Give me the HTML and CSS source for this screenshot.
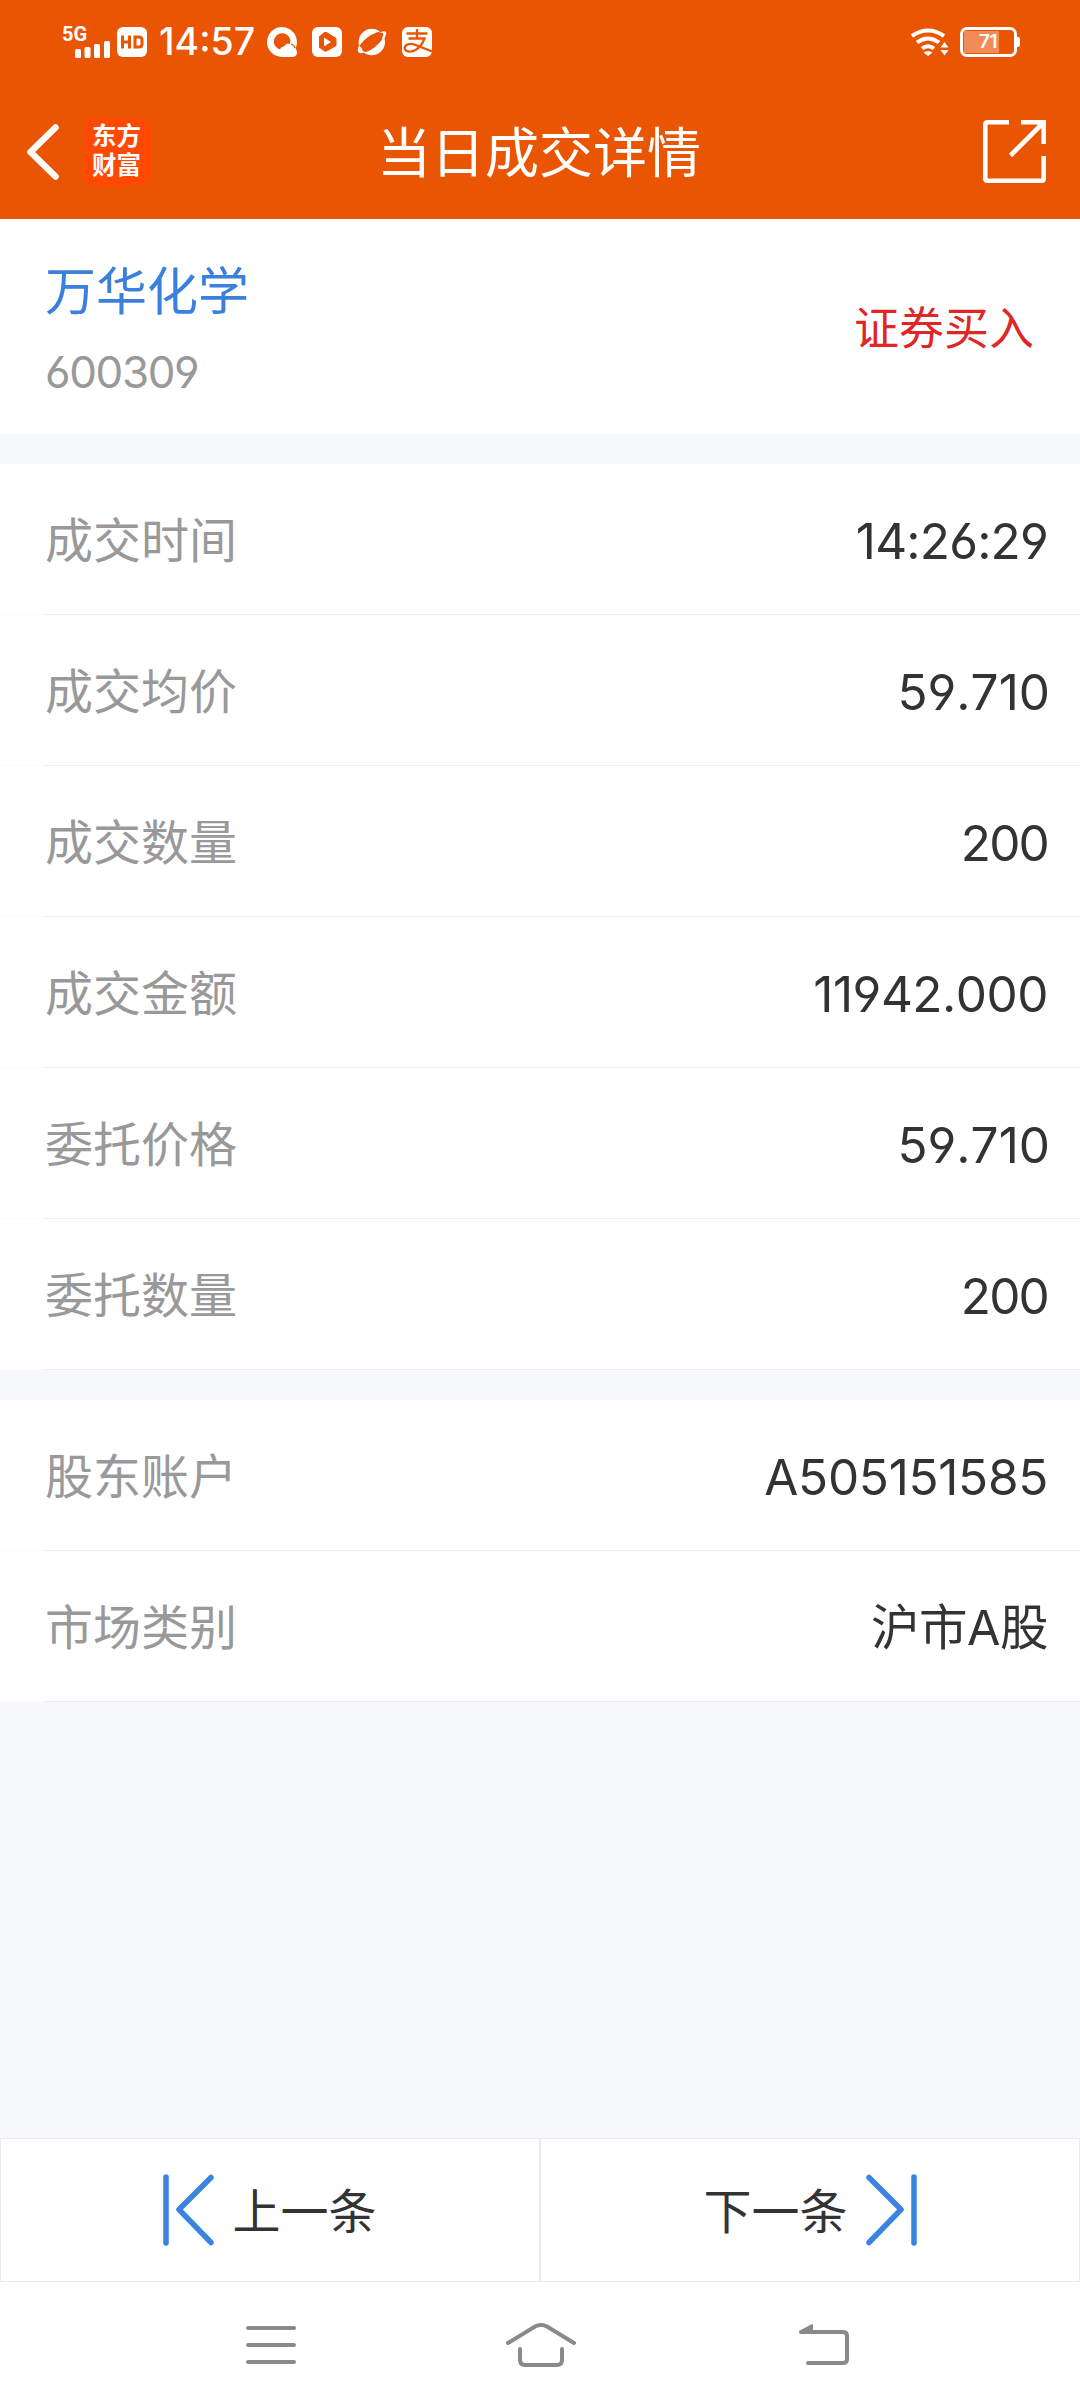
FILE: index.html
```html
<!DOCTYPE html>
<html lang="zh-CN">
<head>
<meta charset="utf-8">
<title>当日成交详情</title>
<link rel="stylesheet" href="styles.css">
</head>
<body>
<div class="screen">
  <header class="top">
    <div class="status">
      <div class="status-left">
        <div class="signal">
          <span class="net">5G</span>
          <svg class="bars" width="36" height="17" viewBox="0 0 36 17" fill="#fff"><rect x="0" y="8" width="6" height="9" rx="1.5"/><rect x="9.500" y="6" width="6" height="11" rx="1.500"/><rect x="19" y="3" width="6" height="14" rx="1.500"/><rect x="29" y="0" width="6" height="17" rx="1.500"/></svg>
        </div>
        <svg class="ic-hd" width="30" height="30" viewBox="0 0 30 30"><rect width="30" height="30" rx="6" fill="#fff"/><path d="M5.500 8.500v13M12.500 8.500v13M5.500 15h7M18 10v10h4q3 0 3-3v-4q0-3-3-3z" fill="none" stroke="#ea5504" stroke-width="3"/></svg>
        <span class="clock">14:57</span>
        <svg class="ic" width="30" height="30" viewBox="0 0 30 30"><path d="M15 0a15 15 0 0 1 13.500 21.500q1.500 1.500 1.500 4 0 4-4.500 4.500H15A15 15 0 0 1 15 0z" fill="#fff"/><path d="M13 22.500A8.300 8.300 0 1 1 23 17q-4-1.500-6 2.500-3 0-4 3z" fill="#ea5504"/><path d="M24 17q3.500 1 4 4" stroke="#ea5504" stroke-width="1.300" fill="none"/></svg>
        <svg class="ic" width="30" height="30" viewBox="0 0 30 30"><rect width="30" height="30" rx="6" fill="#fff"/><path d="M12.500 5h2l9 5.500q1 .7 1 2v5q0 1.300-1 2l-9 5h-2L7 20.500V9.500z" fill="#ea5504"/><path d="M12 10.500v9l7-4.500z" fill="#fff"/></svg>
        <svg class="ic" width="30" height="30" viewBox="0 0 30 30"><circle cx="14.800" cy="15" r="13.200" fill="#fff"/><path d="M2.500 19Q7 12 14 8 20 4.500 26 4 29 4 28 7.500 25 14 18 20 12 25 5 25.500 1.500 25 2.500 19z" fill="#ea5504"/><path d="M2 18.500Q-1 25.500 3.500 26.300 6 26.300 8 25.500L4.500 21zM22.500 5.500Q29.500 2.500 29.300 6.500 28.800 9.500 26 13.500L24.500 9z" fill="#fff"/><path d="M5 21.500Q5 16 13 10.500 21 5 26 6 27.500 9.500 20 16 12 23.500 6 24.500z" fill="#ea5504"/></svg>
        <svg class="ic" width="30" height="30" viewBox="0 0 30 30"><rect width="30" height="30" rx="6" fill="#fff"/><path d="M4.500 6.500h21M15 2v9.500M6.500 11.500H22.500Q19.500 19.500 13.500 23 8 26 4 23.500 1 20.500 4.500 18 9 15.500 15 18.500L30 24.500" fill="none" stroke="#ea5504" stroke-width="2.300"/></svg>
      </div>
      <div class="status-right">
        <svg width="40" height="28" viewBox="0 0 40 28"><g fill="none" stroke="#fff" stroke-width="4"><path d="M2 8Q18-3 34 8"/><path d="M7 14.500Q18 6.500 29 14.500"/><path d="M12 20.500Q18 16 24 20.500"/></g><path d="M13.500 24.500Q18 21.500 22.500 24.500L18 28zM34.500 14l4 5.500h-8zM34.500 27.500l4-5.500h-8z" fill="#fff"/></svg>
        <div class="battery"><span class="charge"></span><span class="percent">71</span></div>
        <span class="battery-tip"></span>
      </div>
    </div>
    <div class="titlebar">
      <div class="title-left">
        <svg width="34" height="56" viewBox="0 0 34 56"><path d="M29.500 3.500L4.500 28l25 24.500" fill="none" stroke="#fff" stroke-width="6.500" stroke-linecap="round" stroke-linejoin="round"/></svg>
        <div class="logo">东方<br>财富</div>
      </div>
      <h1 class="title">当日成交详情</h1>
      <svg class="share" width="64" height="63" viewBox="0 0 64 63"><path d="M26 2.300H4.500Q2.300 2.300 2.300 4.500V58.500Q2.300 60.700 4.500 60.700H58.500Q60.700 60.700 60.700 58.500V36M38 2.300H60.700V24M60 3L27.500 35.500" fill="none" stroke="#fff" stroke-width="4.600"/></svg>
    </div>
  </header>

  <section class="stock">
    <div class="stock-id">
      <div class="name">万华化学</div>
      <div class="code">600309</div>
    </div>
    <div class="side">证券买入</div>
  </section>

  <section class="group">
    <div class="row"><span class="label">成交时间</span><span class="value v-time">14:26:29</span></div>
    <div class="row"><span class="label">成交均价</span><span class="value v-price">59.710</span></div>
    <div class="row"><span class="label">成交数量</span><span class="value">200</span></div>
    <div class="row"><span class="label">成交金额</span><span class="value v-amount">11942.000</span></div>
    <div class="row"><span class="label">委托价格</span><span class="value v-price">59.710</span></div>
    <div class="row"><span class="label">委托数量</span><span class="value">200</span></div>
  </section>

  <section class="group">
    <div class="row"><span class="label">股东账户</span><span class="value v-account">A505151585</span></div>
    <div class="row"><span class="label">市场类别</span><span class="value v-market">沪市A股</span></div>
  </section>

  <div class="pager">
    <div class="page-btn prev">
      <svg width="51" height="72" viewBox="0 0 51 72"><path d="M3 3v66M48 3.500L16 35.500l32 33" fill="none" stroke="#3a83e0" stroke-width="5.500" stroke-linecap="round" stroke-linejoin="round"/></svg>
      <span>上一条</span>
    </div>
    <div class="page-btn next">
      <span>下一条</span>
      <svg width="51" height="72" viewBox="0 0 51 72"><path d="M48 3v66M3 3.500L35 35.500l-32 33" fill="none" stroke="#3a83e0" stroke-width="5.500" stroke-linecap="round" stroke-linejoin="round"/></svg>
    </div>
  </div>

  <nav class="navbar">
    <svg width="50" height="40" viewBox="0 0 50 40"><path d="M2 3h46M2 20h46M2 37h46" stroke="#8a8a8a" stroke-width="4" stroke-linecap="round"/></svg>
    <svg class="home" width="70" height="44" viewBox="0 0 70 44"><g fill="none" stroke="#8a8a8a" stroke-width="4" stroke-linecap="round"><path d="M2 20L29 3.500Q35 .5 41 3.500L68 20"/><path d="M14 26v11q0 5 5 5h32q5 0 5-5V26"/></g></svg>
    <svg class="back" width="52" height="42" viewBox="0 0 52 42"><path d="M3 8H45q4 0 4 4V35q0 4-4 4H10" fill="none" stroke="#8a8a8a" stroke-width="4" stroke-linecap="round"/><path d="M1 7L13.500 .3Q15 0 15 1v8H2z" fill="#8a8a8a"/></svg>
  </nav>
</div>
</body>
</html>
```
FILE: styles.css
```css
* { box-sizing: border-box; }

body {
  margin: 0;
  background: #f7f8fa;
  font-family: Inter, "Noto Sans CJK SC", sans-serif;
  font-feature-settings: "cv03", "cv04";
  font-kerning: none;
  color: #333;
}

svg { display: block; flex: none; }

.screen {
  display: flex;
  flex-direction: column;
  width: 1080px;
  height: 2408px;
}

/* header */
.top {
  height: 219px;
  background: #ea5504;
  color: #fff;
}

.status {
  display: flex;
  justify-content: space-between;
  align-items: center;
  height: 84px;
  padding: 0 60px 0 62px;
}

.status-left,
.status-right {
  display: flex;
  align-items: center;
}

.signal { width: 55px; height: 31px; }

.net {
  display: block;
  height: 14px;
  font-family: Roboto, sans-serif;
  font-size: 20px;
  font-weight: 700;
  line-height: 14px;
}

.bars { margin-left: 13px; }

.clock {
  width: 105px;
  margin-left: 12px;
  font-size: 37.500px;
  font-weight: 450;
  line-height: 40px;
  letter-spacing: 0;
  white-space: nowrap;
}

.ic { margin-right: 15px; }
.clock + .ic { margin-left: 3px; }

.battery {
  position: relative;
  width: 57px;
  height: 30px;
  margin-left: 10px;
  padding: 1px;
  border: 3px solid #fff;
  border-radius: 7px;
}

.charge {
  display: block;
  width: 35px;
  height: 22px;
  background: #f18c56;
}

.percent {
  position: absolute;
  left: 16px;
  top: 1px;
  font-size: 19px;
  font-weight: 600;
  line-height: 22px;
  letter-spacing: -0.5px;
}

.battery-tip {
  width: 3px;
  height: 10px;
  background: #fff;
  border-radius: 0 2px 2px 0;
}

.titlebar {
  display: grid;
  grid-template-columns: 1fr auto 1fr;
  align-items: center;
  height: 135px;
  padding: 0 33px 0 26px;
}

.title-left {
  display: flex;
  align-items: center;
  gap: 23px;
}

.logo {
  width: 68px;
  height: 68px;
  padding: 2px 0 0 9px;
  background: #ff4800;
  border-radius: 14px;
  font-family: "Noto Sans CJK SC", sans-serif;
  font-size: 24.500px;
  font-weight: 700;
  line-height: 29.500px;
}

.title {
  margin: 4px 0 0 5px;
  font-size: 54px;
  font-weight: 400;
  line-height: 72px;
}

.share { justify-self: end; }

/* stock card */
.stock {
  display: flex;
  justify-content: space-between;
  align-items: center;
  height: 215px;
  padding: 5px 46px 0 45px;
  background: #fff;
}

.name {
  margin-top: 5px;
  color: #3a80dc;
  font-size: 51px;
  line-height: 76px;
}

.code {
  margin-top: 4px;
  color: #999;
  font-size: 44px;
  line-height: 76px;
  letter-spacing: -1.4px;
}

.side {
  color: #e02626;
  font-size: 45px;
  line-height: 66px;
}

/* detail rows */
.group {
  margin-top: 30px;
  background: #fff;
}

.row {
  display: flex;
  justify-content: space-between;
  align-items: center;
  height: 151px;
  padding: 3px 32px 0 45px;
  background: linear-gradient(#eee, #eee) 45px 100% / 100% 1px no-repeat, linear-gradient(#fafafa, #fafafa) 0 100% / 45px 1px no-repeat;
}

.label {
  color: #999;
  font-size: 48px;
  line-height: 72px;
}

.value {
  font-size: 49.500px;
  line-height: 72px;
  letter-spacing: -1.8px;
}

.v-time { letter-spacing: -0.8px; }
.v-price { margin-right: -2px; letter-spacing: 0; }
.v-amount { letter-spacing: -0.5px; }
.v-account { letter-spacing: -0.3px; }
.v-market { font-size: 48.500px; letter-spacing: -0.5px; }

/* pager */
.pager {
  display: flex;
  height: 144px;
  margin-top: auto;
  background: #fff;
}

.page-btn {
  display: flex;
  flex: 1;
  justify-content: center;
  align-items: center;
  gap: 18px;
  border: 1px solid #ebebeb;
  font-size: 48px;
  line-height: 72px;
}

.page-btn span { padding-top: 4px; }

/* system navigation */
.navbar {
  display: flex;
  align-items: center;
  height: 126px;
  padding-left: 246px;
  background: #fff;
}

.home { margin-left: 210px; }
.back { margin-left: 222px; }
```
